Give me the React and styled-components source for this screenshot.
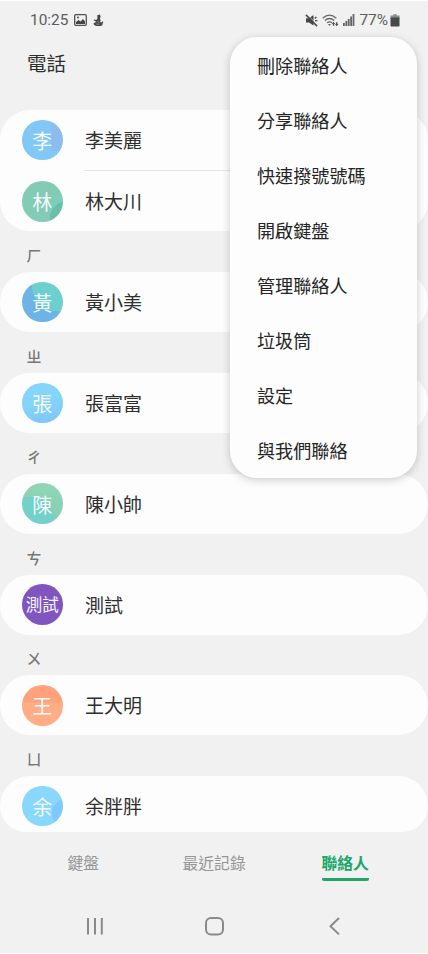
import React from 'react';
import styled, { createGlobalStyle } from 'styled-components';

const GlobalStyle = createGlobalStyle`
  * {
    box-sizing: border-box;
  }
  body {
    margin: 0;
    background: #fff;
    font-family: Roboto, 'Noto Sans CJK TC', sans-serif;
  }
`;

const Phone = styled.div`
  position: relative;
  display: flex;
  flex-direction: column;
  width: 428px;
  height: 952px;
  margin-top: 1px;
  overflow: hidden;
  background: #f1f1f1;
`;

// status bar
const StatusBar = styled.div`
  display: flex;
  flex-shrink: 0;
  justify-content: space-between;
  align-items: center;
  height: 38px;
  padding: 0 28px 0 30px;
  color: #5c5c5c;
  font-size: 15.4px;
`;

const StatusSide = styled.div`
  display: flex;
  align-items: center;
  gap: ${(props) => props.gap};
`;

const Battery = styled.div`
  display: flex;
  align-items: center;
  gap: 2px;
`;

const Title = styled.h1`
  flex-shrink: 0;
  height: 71px;
  margin: 0;
  padding: 11.5px 27px 0;
  color: #2f2f2f;
  font-size: 19.5px;
  font-weight: 400;
  line-height: 28px;
`;

// contacts
const ContactList = styled.main`
  flex-shrink: 0;
  height: 722px;
  overflow: hidden;
`;

const GroupLabel = styled.div`
  display: flex;
  align-items: center;
  height: 40.8px;
  padding: 9px 26.5px 0;
  color: #777;
  font-size: 15px;
  font-weight: 500;
  line-height: 20px;
`;

const Card = styled.div`
  border-radius: 30px;
  background: #fdfdfd;
  ${(props) => props.clipped && 'height: 56px; border-radius: 30px 30px 26px 26px;'}
`;

const ContactRow = styled.div`
  display: flex;
  align-items: center;
  height: 60px;
  padding-left: 22px;
`;

const Avatar = styled.div`
  display: flex;
  flex-shrink: 0;
  justify-content: center;
  align-items: center;
  width: 40.6px;
  height: 40.6px;
  margin-right: 22.4px;
  padding-top: 4px;
  border-radius: 50%;
  background: ${(props) => props.bg};
  color: #f4fafc;
  font-size: ${(props) => (props.small ? '16.5px' : '20px')};
  line-height: 1;
`;

const Name = styled.span`
  padding-top: 4px;
  color: #2f2f2f;
  font-size: 19px;
  line-height: 28px;
`;

const Divider = styled.div`
  height: 1.4px;
  margin: 0 22px 0 84px;
  background: #e9e4e4;
`;

// more menu
const Menu = styled.ul`
  position: absolute;
  top: 36px;
  left: 230px;
  width: 187px;
  height: 441px;
  margin: 0;
  padding: 0 27px;
  list-style: none;
  border-radius: 27px;
  background: #fdfdfd;
  box-shadow: 0 2px 8px rgba(0, 0, 0, 0.2);
`;

const MenuItem = styled.li`
  display: flex;
  align-items: center;
  height: 55.1px;
  color: #242424;
  font-size: 18.1px;
  white-space: nowrap;
`;

// bottom tabs
const Tabs = styled.nav`
  display: grid;
  flex-shrink: 0;
  grid-template-columns: 115px 139px auto;
  justify-items: start;
  padding: 20px 0 0 67.5px;
`;

const Tab = styled.div`
  height: 29px;
  border-bottom: 3px solid ${(props) => (props.selected ? '#20a66b' : 'transparent')};
  border-radius: 2px;
  color: ${(props) => (props.selected ? '#20a66b' : '#969696')};
  font-size: 15.8px;
  font-weight: ${(props) => (props.selected ? 700 : 400)};
  line-height: 24px;
`;

const NavBar = styled.div`
  display: flex;
  justify-content: space-between;
  align-items: center;
  height: 50px;
  margin-top: 20px;
  padding: 0 82px 0 84px;
`;

const groups = [
  {
    contacts: [
      { name: '李美麗', initial: '李', bg: 'linear-gradient(#8cbbee, #8cbbee) 100% 0 / 12px 31px no-repeat, #82c8f7' },
      {
        name: '林大川',
        initial: '林',
        bg: 'radial-gradient(circle at 46px 38px, #69bfa8 0 18px, transparent 18.5px), radial-gradient(circle at 42px 28px, #75d0bf 0 12px, transparent 12.5px), #84cbb6',
      },
    ],
  },
  {
    label: 'ㄏ',
    contacts: [
      {
        name: '黃小美',
        initial: '黃',
        bg: 'radial-gradient(circle at 36px 3px, #6dcfce 0 26px, transparent 26.5px), #6db3e5',
      },
    ],
  },
  {
    label: 'ㄓ',
    contacts: [{ name: '張富富', initial: '張', bg: 'linear-gradient(165deg, #85d5fb 45%, #7dc3f5)' }],
  },
  {
    label: 'ㄔ',
    contacts: [
      {
        name: '陳小帥',
        initial: '陳',
        bg: 'radial-gradient(circle at 8px 37px, #73d0cb 0 23px, transparent 23.5px), linear-gradient(#91d6b6, #83ceb8)',
      },
    ],
  },
  {
    label: 'ㄘ',
    contacts: [{ name: '測試', initial: '測試', bg: '#8055c0', small: true }],
  },
  {
    label: 'ㄨ',
    contacts: [{ name: '王大明', initial: '王', bg: 'linear-gradient(#ffa17b 42%, #ffad87 43%)' }],
  },
  {
    label: 'ㄩ',
    clipped: true,
    contacts: [
      {
        name: '余胖胖',
        initial: '余',
        bg: 'radial-gradient(circle at 43px 27px, #7dcafa 0 13px, transparent 13.5px), #89d7fb',
      },
    ],
  },
];

const menuItems = ['刪除聯絡人', '分享聯絡人', '快速撥號號碼', '開啟鍵盤', '管理聯絡人', '垃圾筒', '設定', '與我們聯絡'];

const tabs = ['鍵盤', '最近記錄', '聯絡人'];

function PictureIcon() {
  return (
    <svg width="13" height="12" viewBox="0 0 13 12">
      <rect x="0.7" y="0.7" width="11.6" height="10.6" rx="1" fill="none" stroke="#505050" strokeWidth="1.3" />
      <path d="M2 10V8l2.5-2 2 1.5L9 5l2 2.5V10z" fill="#444" />
      <circle cx="4" cy="3.5" r="1" fill="#505050" />
    </svg>
  );
}

function FigureIcon() {
  return (
    <svg width="11" height="13" viewBox="0 0 11 13">
      <path
        d="M4.2 1.2L7 .5l.7 2.2-.8 1.5.7 2-.5 1.8 1.2.6 1.2-1.3.9.8-.9 1.6-.2 1.6L7.7 12H3L.9 10.8.6 8.9l1.9-.4.4-1L.6 6.2l.6-.8 2.2.5 1.1-1.6z"
        fill="#484848"
      />
      <path d="M4.2 7.6l2 .8M3.2 10.1l3 .2" stroke="#c0c0c0" strokeWidth="0.6" />
    </svg>
  );
}

function MuteIcon() {
  return (
    <svg width="13" height="13" viewBox="0 0 13 13">
      <path d="M1 4.2h3L8.5 1v10.6L4 8.5H1z" fill="#484848" />
      <path d="M1.9.4l11 11" stroke="#f1f1f1" strokeWidth="0.8" />
      <path d="M.9.9l11.2 11.2" stroke="#484848" strokeWidth="1.5" />
      <path d="M9.7 4.4l1.8-1.4M10 6.7h2.4" stroke="#484848" strokeWidth="1.3" />
    </svg>
  );
}

function WifiIcon() {
  return (
    <svg width="17" height="13" viewBox="0 0 17 13" fill="none" stroke="#666" strokeWidth="1.3">
      <path d="M.7 4.2Q7.5-2 14.3 4.2M2.8 6.5q4.7-4 9.4 0M5 8.8q2.5-2 5 0" />
      <path d="M6 10h3l-1.5 2z" fill="#666" stroke="none" />
      <path d="M9.8 10l1.7-2.3 1.7 2.3zM13 10l1.7 2.3 1.7-2.3zM10.8 10h1.4v1.8h-1.4zM14 8.2h1.4V10H14z" fill="#505050" stroke="none" />
    </svg>
  );
}

function SignalIcon() {
  return (
    <svg width="12" height="12" viewBox="0 0 12 12" fill="#666">
      <path d="M0 9h1.8v3H0zM2.4 7h1.8v5H2.4zM4.8 5h1.8v7H4.8zM7.2 2.5H9V12H7.2zM9.6 0h1.8v12H9.6z" />
    </svg>
  );
}

function BatteryIcon() {
  return (
    <svg width="10" height="13" viewBox="0 0 10 13">
      <path d="M3.3.3h3.4v1.2h2.8v3h-9v-3h2.8z" fill="#8c8c8c" />
      <rect x="0.5" y="3.5" width="9" height="9" rx="0.8" fill="#484848" />
    </svg>
  );
}

function Contact({ contact }) {
  return (
    <ContactRow>
      <Avatar bg={contact.bg} small={contact.small}>
        {contact.initial}
      </Avatar>
      <Name>{contact.name}</Name>
    </ContactRow>
  );
}

function Contacts() {
  return (
    <ContactList>
      {groups.map((group) => (
        <React.Fragment key={group.label || 'top'}>
          {group.label && <GroupLabel>{group.label}</GroupLabel>}
          <Card clipped={group.clipped}>
            {group.contacts.map((contact, i) => (
              <React.Fragment key={contact.name}>
                {i > 0 && <Divider />}
                <Contact contact={contact} />
              </React.Fragment>
            ))}
          </Card>
        </React.Fragment>
      ))}
    </ContactList>
  );
}

function App() {
  return (
    <>
      <GlobalStyle />
      <Phone>
        <StatusBar>
          <StatusSide gap="6px">
            <span>10:25</span>
            <PictureIcon />
            <FigureIcon />
          </StatusSide>
          <StatusSide gap="4.2px">
            <MuteIcon />
            <WifiIcon />
            <SignalIcon />
            <Battery>
              <span>77%</span>
              <BatteryIcon />
            </Battery>
          </StatusSide>
        </StatusBar>
        <Title>電話</Title>
        <Contacts />
        <Tabs>
          {tabs.map((tab) => (
            <Tab key={tab} selected={tab === '聯絡人'}>
              {tab}
            </Tab>
          ))}
        </Tabs>
        <NavBar>
          <svg width="22" height="20" viewBox="0 0 22 20" stroke="#8a8a8a" strokeWidth="2">
            <path d="M4 2v16.5M11 2v16.5M17.8 2v16.5" />
          </svg>
          <svg width="22" height="20" viewBox="0 0 22 20" fill="none" stroke="#8a8a8a" strokeWidth="2">
            <rect x="2" y="2" width="17" height="16.4" rx="5" />
          </svg>
          <svg width="22" height="20" viewBox="0 0 22 20" fill="none" stroke="#8a8a8a" strokeWidth="2">
            <path d="M15 2L6.5 10.2l8.5 8.2" />
          </svg>
        </NavBar>
        <Menu>
          {menuItems.map((item) => (
            <MenuItem key={item}>{item}</MenuItem>
          ))}
        </Menu>
      </Phone>
    </>
  );
}

export default App;
